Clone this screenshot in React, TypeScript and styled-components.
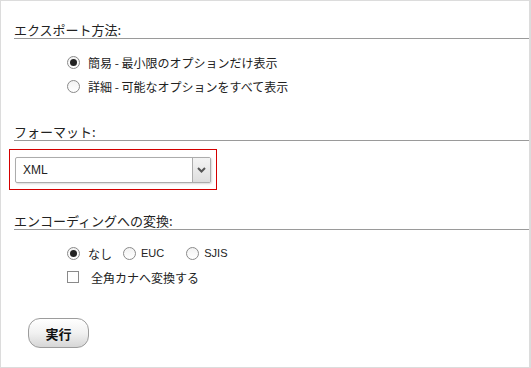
import React from 'react';
import styled, { createGlobalStyle } from 'styled-components';

const GlobalStyle = createGlobalStyle`
  html, body {
    margin: 0;
    padding: 0;
    background: #ffffff;
  }
  body {
    font-family: 'Liberation Sans', 'Noto Sans CJK JP', sans-serif;
    color: #222222;
  }
`;

const Frame = styled.div`
  box-sizing: border-box;
  width: 531px;
  height: 368px;
  border: 1px solid #dcdcdc;
  border-right-width: 2px;
  background: #ffffff;
  padding: 21px 0 0 13px;
`;

const Section = styled.section<{ $gap?: number }>`
  margin-top: ${({ $gap }) => $gap ?? 0}px;
`;

const Heading = styled.h2`
  margin: 0;
  height: 16px;
  font-family: 'Noto Sans CJK JP', sans-serif;
  font-size: 13px;
  line-height: 16px;
  font-weight: normal;
  color: #222222;
  border-bottom: 1px solid #9a9a9a;
  white-space: nowrap;
`;

const Options = styled.div`
  display: flex;
  flex-direction: column;
  padding: 11px 0 0 53px;
`;

const Row = styled.div`
  display: flex;
  align-items: center;
  height: 24px;
`;

const Choice = styled.label<{ $space?: number }>`
  display: flex;
  align-items: center;
  margin-right: ${({ $space }) => $space ?? 0}px;
  font-family: 'Noto Sans CJK JP', sans-serif;
  font-size: 12px;
  color: #222222;
  white-space: nowrap;
`;

const Latin = styled.span`
  font-family: 'Liberation Sans', sans-serif;
  font-size: 11px;
  margin-left: -3px;
`;

const Radio = styled.span<{ $on?: boolean }>`
  box-sizing: border-box;
  display: inline-flex;
  align-items: center;
  justify-content: center;
  width: 13px;
  height: 13px;
  margin-right: 8px;
  border-radius: 50%;
  border: 1px solid #8a8a8a;
  background: linear-gradient(#f2f2f2, #ffffff);
  &::after {
    content: '';
    display: ${({ $on }) => ($on ? 'block' : 'none')};
    width: 7px;
    height: 7px;
    border-radius: 50%;
    background: #222222;
  }
`;

const Check = styled.span`
  box-sizing: border-box;
  display: inline-block;
  width: 12px;
  height: 12px;
  margin-right: 12px;
  border: 1px solid #8a8a8a;
  background: #ffffff;
`;

const Highlight = styled.div`
  box-sizing: border-box;
  width: 208px;
  height: 41px;
  margin: 8px 0 0 -5px;
  border: 1px solid #d40000;
  padding: 7px 5px 0 5px;
`;

const Select = styled.div`
  box-sizing: border-box;
  display: flex;
  width: 196px;
  height: 26px;
  border: 1px solid #acacac;
  border-radius: 2px;
  background: #ffffff;
  box-shadow: 1px 1px 2px rgba(0, 0, 0, 0.15);
`;

const SelectValue = styled.div`
  flex: 1;
  display: flex;
  align-items: center;
  padding-left: 7px;
  font-family: 'Liberation Sans', sans-serif;
  font-size: 12px;
  color: #222222;
`;

const SelectArrow = styled.div`
  box-sizing: border-box;
  width: 18px;
  display: flex;
  align-items: center;
  justify-content: center;
  border-left: 1px solid #acacac;
  background: linear-gradient(#f4f4f4, #dedede);
`;

const RunButton = styled.button`
  box-sizing: border-box;
  width: 61px;
  height: 30px;
  margin: 29px 0 0 14px;
  border: 1px solid #9c9c9c;
  border-radius: 12px;
  background: linear-gradient(#ffffff 0%, #f1f1f1 50%, #d6d6d6 100%);
  font-family: 'Noto Sans CJK JP', sans-serif;
  font-size: 13px;
  font-weight: bold;
  color: #111111;
  padding: 0;
  cursor: pointer;
`;

const Chevron = () => (
  <svg width="9" height="6" viewBox="0 0 9 6">
    <path d="M1 1 L4.5 4.5 L8 1" fill="none" stroke="#555" strokeWidth="2" />
  </svg>
);

export default function App() {
  return (
    <>
      <GlobalStyle />
      <Frame>
        <Section>
          <Heading>エクスポート方法:</Heading>
          <Options>
            <Row>
              <Choice>
                <Radio $on />
                簡易 - 最小限のオプションだけ表示
              </Choice>
            </Row>
            <Row>
              <Choice>
                <Radio />
                詳細 - 可能なオプションをすべて表示
              </Choice>
            </Row>
          </Options>
        </Section>

        <Section $gap={26}>
          <Heading>フォーマット:</Heading>
          <Highlight>
            <Select>
              <SelectValue>XML</SelectValue>
              <SelectArrow>
                <Chevron />
              </SelectArrow>
            </Select>
          </Highlight>
        </Section>

        <Section $gap={23}>
          <Heading>エンコーディングへの変換:</Heading>
          <Options>
            <Row>
              <Choice $space={11}>
                <Radio $on />
                なし
              </Choice>
              <Choice $space={22}>
                <Radio />
                <Latin>EUC</Latin>
              </Choice>
              <Choice>
                <Radio />
                <Latin>SJIS</Latin>
              </Choice>
            </Row>
            <Row>
              <Choice>
                <Check />
                全角カナへ変換する
              </Choice>
            </Row>
          </Options>
          <RunButton>実行</RunButton>
        </Section>
      </Frame>
    </>
  );
}
